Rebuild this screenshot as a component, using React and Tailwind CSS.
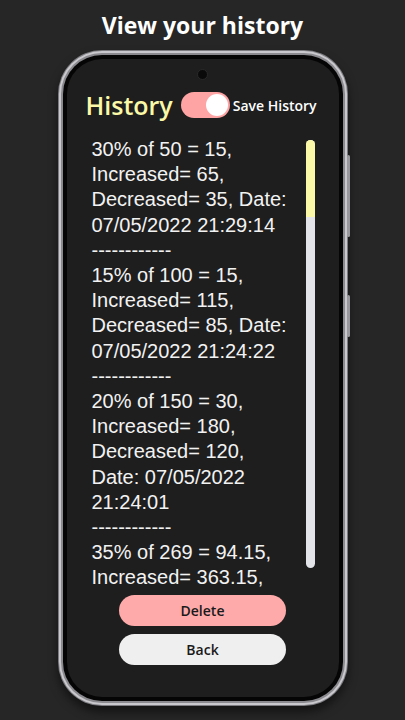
import React from 'react';

const entries = [
  ['30% of 50 = 15,', 'Increased= 65,', 'Decreased= 35, Date:', '07/05/2022 21:29:14'],
  ['15% of 100 = 15,', 'Increased= 115,', 'Decreased= 85, Date:', '07/05/2022 21:24:22'],
  ['20% of 150 = 30,', 'Increased= 180,', 'Decreased= 120,', 'Date: 07/05/2022', '21:24:01'],
];

const App = () => {
  return (
    <div className="w-[405px] h-[720px] bg-[#262626] flex flex-col items-center overflow-hidden font-['Open_Sans',sans-serif]">
      <h1 className="mt-[7px] text-white font-bold text-[23px] leading-[36px]">View your history</h1>

      {/* telefone */}
      <div className="relative mt-[7px] w-[290px] h-[656px] rounded-[44px] bg-[#7c7c80] p-[1px] shadow-[0_6px_10px_rgba(0,0,0,0.5)]">
        <div className="absolute right-[-2px] top-[105px] w-[3px] h-[82px] rounded-sm bg-[#9a9a9e]" />
        <div className="absolute right-[-2px] top-[245px] w-[3px] h-[42px] rounded-sm bg-[#9a9a9e]" />
        <div className="h-full rounded-[43px] bg-[#c9c9cd] p-[2px]">
          <div className="h-full rounded-[41px] bg-[#8a8a8e] p-[2px]">
            <div className="h-full rounded-[39px] bg-[#050505] p-[4px]">
              <div className="h-full rounded-[35px] bg-[#1e1e1e] flex flex-col overflow-hidden">
                {/* camera */}
                <div className="flex justify-center mt-[10px]">
                  <div className="w-[11px] h-[11px] rounded-full bg-[#0a0a0a] border border-[#2a2a2a]" />
                </div>

                {/* header */}
                <div className="flex items-center mt-[9px] pl-[19px]">
                  <span className="text-[#fbf9a7] font-semibold text-[25px] leading-[32px]">History</span>
                  <div className="ml-[8px] w-[49px] h-[26px] rounded-full bg-[#ffa4a4] flex items-center justify-end pr-[2px]">
                    <div className="w-[22px] h-[22px] rounded-full bg-white" />
                  </div>
                  <span className="ml-[3px] text-white font-semibold text-[14px]">Save History</span>
                </div>

                {/* lista */}
                <div className="flex mt-[16px] h-[453px]">
                  <div className="flex-1 overflow-hidden pl-[25px] text-[#f2f2f2] text-[20px] leading-[25.2px] font-['Liberation_Sans',Arial,sans-serif]">
                    {entries.map((lines, i) => (
                      <div key={i}>
                        {lines.map((l, j) => (
                          <div key={j} className="whitespace-nowrap">{l}</div>
                        ))}
                        <div className="whitespace-nowrap">------------</div>
                      </div>
                    ))}
                    <div className="whitespace-nowrap">35% of 269 = 94.15,</div>
                    <div className="whitespace-nowrap">Increased= 363.15,</div>
                  </div>
                  <div className="mr-[24px] mt-[3px] w-[9px] h-[428px] rounded-full bg-[#e2e4e9] overflow-hidden">
                    <div className="h-[77px] bg-[#fbf9a7]" />
                  </div>
                </div>

                {/* botoes */}
                <div className="flex flex-col items-center gap-[8px] mt-[5px]">
                  <button className="w-[167px] h-[31px] rounded-full bg-[#ffaaaa] text-[#1a1a1a] text-[14px] leading-[20px] font-semibold">Delete</button>
                  <button className="w-[167px] h-[31px] rounded-full bg-[#efefef] text-[#1a1a1a] text-[14px] leading-[20px] font-semibold">Back</button>
                </div>
              </div>
            </div>
          </div>
        </div>
      </div>
    </div>
  );
};

export default App;
